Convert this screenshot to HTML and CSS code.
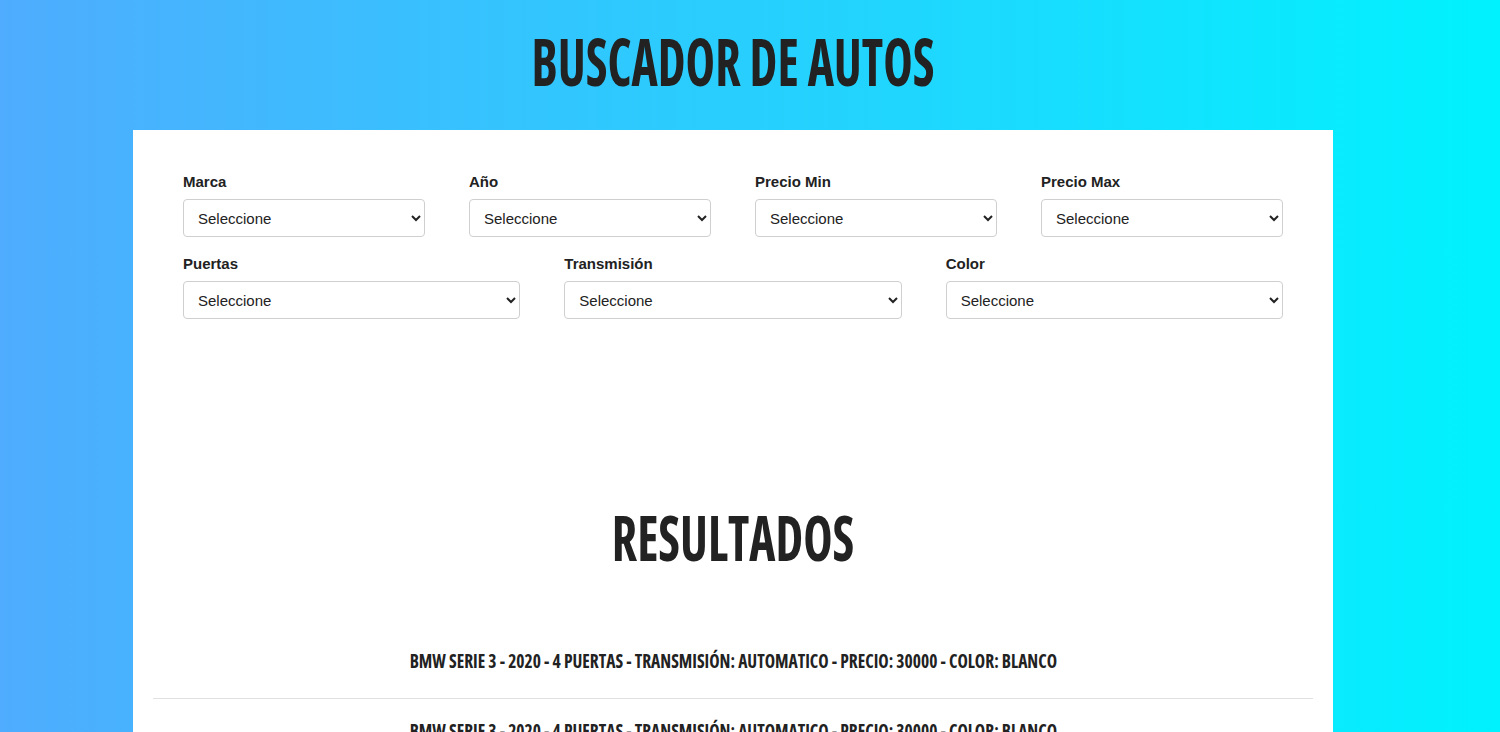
FILE: index.html
```html
<!DOCTYPE html>
<html lang="es">
<head>
<meta charset="utf-8">
<title>Buscador de Autos</title>
<link rel="stylesheet" href="styles.css">
</head>
<body>
<div class="page">
<header class="header">
  <h1 class="title">Buscador de Autos</h1>
</header>
<main class="container">
  <form class="buscador">
    <div class="row row-4">
      <div class="field">
        <label class="label" for="marca">Marca</label>
        <select class="select" id="marca"><option>Seleccione</option></select>
      </div>
      <div class="field">
        <label class="label" for="year">Año</label>
        <select class="select" id="year"><option>Seleccione</option></select>
      </div>
      <div class="field">
        <label class="label" for="minimo">Precio Min</label>
        <select class="select" id="minimo"><option>Seleccione</option></select>
      </div>
      <div class="field">
        <label class="label" for="maximo">Precio Max</label>
        <select class="select" id="maximo"><option>Seleccione</option></select>
      </div>
    </div>
    <div class="row row-3">
      <div class="field">
        <label class="label" for="puertas">Puertas</label>
        <select class="select" id="puertas"><option>Seleccione</option></select>
      </div>
      <div class="field">
        <label class="label" for="transmision">Transmisión</label>
        <select class="select" id="transmision"><option>Seleccione</option></select>
      </div>
      <div class="field">
        <label class="label" for="color">Color</label>
        <select class="select" id="color"><option>Seleccione</option></select>
      </div>
    </div>
  </form>
  <h2 class="subtitle">Resultados</h2>
  <div class="resultados">
    <p class="auto"><span class="auto-text">BMW Serie 3 - 2020 - 4 Puertas - Transmisión: automatico - Precio: 30000 - Color: Blanco</span></p>
    <p class="auto"><span class="auto-text">BMW Serie 3 - 2020 - 4 Puertas - Transmisión: automatico - Precio: 30000 - Color: Blanco</span></p>
  </div>
</main>
</div>
</body>
</html>
```
FILE: styles.css
```css
html, body {
  margin: 0;
  padding: 0;
}
body {
  background: linear-gradient(to right, #4facfe 0%, #00f2fe 100%);
  font-family: "Liberation Sans", Arial, sans-serif;
  color: #222;
  min-height: 100vh;
}
.page {
  margin-right: 34px;
}
.header {
  padding-top: 27px;
  height: 130px;
  box-sizing: border-box;
}
.title, .subtitle, .auto {
  font-family: "Open Sans", "DejaVu Sans Condensed", sans-serif;
  font-stretch: 75%;
  font-weight: 700;
  text-transform: uppercase;
  text-align: center;
  color: #222;
}
.title {
  margin: 0;
  font-size: 66px;
  line-height: 66px;
  transform: scaleX(0.755);
}
.container {
  width: 1200px;
  margin: 0 auto;
  background: #fff;
  padding: 42px 20px 0;
  box-sizing: border-box;
}
.buscador {
  padding: 0 30px;
}
.row {
  display: grid;
  column-gap: 44px;
}
.row + .row {
  margin-top: 17px;
}
.row-4 { grid-template-columns: repeat(4, 1fr); }
.row-3 { grid-template-columns: repeat(3, 1fr); }
.field {
  display: flex;
  flex-direction: column;
}
.label {
  font-size: 15px;
  font-weight: 700;
  line-height: 18px;
  padding-top: 1px;
  margin-bottom: 8px;
  color: #222;
}
.select {
  height: 38px;
  font-family: "Liberation Sans", Arial, sans-serif;
  font-size: 15px;
  color: #222;
  background: #fff;
  border: 1px solid #cfcfcf;
  border-radius: 4px;
  padding: 0 10px;
}
.subtitle {
  margin: 187px 0 0;
  font-size: 62px;
  line-height: 62px;
  transform: scaleX(0.8);
}
.resultados {
  margin-top: 81px;
}
.auto {
  margin: 0;
  font-size: 20px;
  line-height: 24px;
  padding: 0 0 25px;
  border-bottom: 1px solid #e1e1e1;
  margin-bottom: 20px;
}
.auto-text {
  display: inline-block;
  transform: scaleX(0.874);
}
```
